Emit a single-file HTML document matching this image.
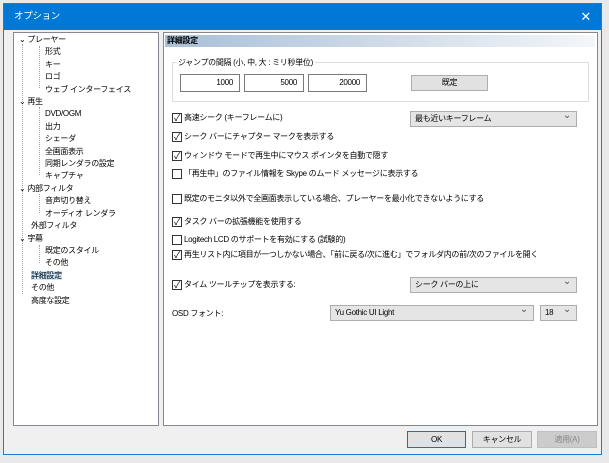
<!DOCTYPE html>
<html><head><meta charset="utf-8"><style>
*{box-sizing:border-box;margin:0;padding:0}
body{width:609px;height:463px;background:#e9e9e9;font-family:"Liberation Sans","Noto Sans CJK JP",sans-serif;font-size:8px;letter-spacing:-0.3px;color:#000;position:relative;overflow:hidden}
.win{position:absolute;left:3px;top:3px;width:599px;height:452px;background:#f0f0f0;border:1px solid #1a7fd4}
.title{position:absolute;left:0;top:0;width:100%;height:26px;background:#0078d7;color:#fff;font-size:9.5px;line-height:26px;padding-left:10px}
.close{position:absolute;right:10px;top:0;font-size:13px;color:#fff}
.a{position:absolute;white-space:nowrap;line-height:11px}
.tree{position:absolute;left:13px;top:32px;width:146px;height:394px;background:#fff;border:1px solid #828790}
.panel{position:absolute;left:163px;top:32px;width:435px;height:394px;background:#fff;border:1px solid #828790}
.hdr{position:absolute;left:165px;top:35px;width:430px;height:12px;background:linear-gradient(to right,#a9bfd6,#f3f6fa);font-weight:bold;padding-left:2px;line-height:12px}
.vl{position:absolute;border-left:1px dotted #a0a0a0}
.cb{position:absolute;width:10px;height:10px;border:1px solid #333;background:#fff;font-size:9px;line-height:8px;text-align:center}
.inp{position:absolute;height:18px;border:1px solid #7a7a7a;background:#fff;text-align:right;padding-right:6px;line-height:16px}
.btn{position:absolute;border:1px solid #adadad;background:#e1e1e1;text-align:center}
.dd{position:absolute;height:16px;border:1px solid #adadad;background:#e5e5e5;line-height:14px;padding-left:4px}
.dd:after{content:"⌄";position:absolute;right:5px;top:-3px;color:#555;font-size:10px}
</style></head><body>
<div class="win">
<div class="title">オプション<span class="close">✕</span></div>
</div>
<div class="tree"></div>
<div class="vl" style="left:22px;top:44px;height:250px"></div>
<div class="vl" style="left:39px;top:46px;height:42px"></div>
<div class="vl" style="left:39px;top:107px;height:68px"></div>
<div class="vl" style="left:39px;top:194px;height:19px"></div>
<div class="vl" style="left:39px;top:245px;height:18px"></div>
<div style="position:absolute;left:19px;line-height:12.4px;top:34px;white-space:nowrap">
<div>⌄ プレーヤー</div>
<div style="padding-left:26px">形式</div>
<div style="padding-left:26px">キー</div>
<div style="padding-left:26px">ロゴ</div>
<div style="padding-left:26px">ウェブ インターフェイス</div>
<div>⌄ 再生</div>
<div style="padding-left:26px">DVD/OGM</div>
<div style="padding-left:26px">出力</div>
<div style="padding-left:26px">シェーダ</div>
<div style="padding-left:26px">全画面表示</div>
<div style="padding-left:26px">同期レンダラの設定</div>
<div style="padding-left:26px">キャプチャ</div>
<div>⌄ 内部フィルタ</div>
<div style="padding-left:26px">音声切り替え</div>
<div style="padding-left:26px">オーディオ レンダラ</div>
<div style="padding-left:12px">外部フィルタ</div>
<div>⌄ 字幕</div>
<div style="padding-left:26px">既定のスタイル</div>
<div style="padding-left:26px">その他</div>
<div style="padding-left:12px"><span style="background:#cce8ff">詳細設定</span></div>
<div style="padding-left:12px">その他</div>
<div style="padding-left:12px">高度な設定</div>
</div>
<div class="panel"></div>
<div class="hdr">詳細設定</div>
<div style="position:absolute;left:172px;top:62px;width:417px;height:40px;border:1px solid #dcdcdc"></div>
<div class="a" style="left:176px;top:57px;background:#fff;padding:0 2px">ジャンプの間隔 (小, 中, 大 : ミリ秒単位)</div>
<div class="inp" style="left:180px;top:74px;width:60px">1000</div>
<div class="inp" style="left:244px;top:74px;width:60px">5000</div>
<div class="inp" style="left:308px;top:74px;width:59px">20000</div>
<div class="btn" style="left:411px;top:75px;width:77px;height:16px;line-height:14px">既定</div>
<div class="cb" style="left:172px;top:113px">✓</div><div class="a" style="left:184px;top:112px">高速シーク (キーフレームに)</div>
<div class="dd" style="left:410px;top:111px;width:167px">最も近いキーフレーム</div>
<div class="cb" style="left:172px;top:132px">✓</div><div class="a" style="left:184px;top:131px">シーク バーにチャプター マークを表示する</div>
<div class="cb" style="left:172px;top:151px">✓</div><div class="a" style="left:184px;top:150px">ウィンドウ モードで再生中にマウス ポインタを自動で隠す</div>
<div class="cb" style="left:172px;top:169px"></div><div class="a" style="left:184px;top:168px">「再生中」のファイル情報を Skype のムード メッセージに表示する</div>
<div class="cb" style="left:172px;top:194px"></div><div class="a" style="left:184px;top:193px">既定のモニタ以外で全画面表示している場合、プレーヤーを最小化できないようにする</div>
<div class="cb" style="left:172px;top:217px">✓</div><div class="a" style="left:184px;top:216px">タスク バーの拡張機能を使用する</div>
<div class="cb" style="left:172px;top:235px"></div><div class="a" style="left:184px;top:234px">Logitech LCD のサポートを有効にする (試験的)</div>
<div class="cb" style="left:172px;top:250px">✓</div><div class="a" style="left:184px;top:249px">再生リスト内に項目が一つしかない場合、「前に戻る/次に進む」でフォルダ内の前/次のファイルを開く</div>
<div class="cb" style="left:172px;top:280px">✓</div><div class="a" style="left:184px;top:279px">タイム ツールチップを表示する:</div>
<div class="dd" style="left:410px;top:277px;width:167px">シーク バーの上に</div>
<div class="a" style="left:172px;top:308px">OSD フォント:</div>
<div class="dd" style="left:330px;top:305px;width:204px">Yu Gothic UI Light</div>
<div class="dd" style="left:540px;top:305px;width:37px">18</div>
<div class="btn" style="left:407px;top:431px;width:59px;height:17px;line-height:15px;border:1px solid #0078d7">OK</div>
<div class="btn" style="left:472px;top:431px;width:60px;height:17px;line-height:15px">キャンセル</div>
<div class="btn" style="left:537px;top:431px;width:60px;height:17px;line-height:15px;background:#ccc;border-color:#bfbfbf;color:#888">適用(A)</div>
</body></html>
